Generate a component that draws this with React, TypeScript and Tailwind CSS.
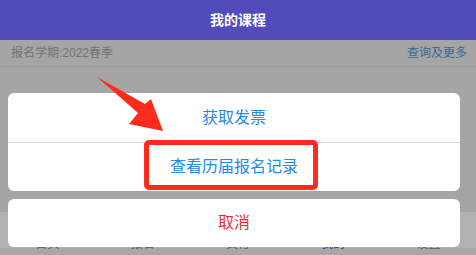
import React from "react";

const tabs = [
  { label: "首页", active: false },
  { label: "报名", active: false },
  { label: "支付", active: false },
  { label: "我的", active: true },
  { label: "设置", active: false },
];

function ActionSheet() {
  return (
    <div className="absolute left-[8px] right-[16px] bottom-[8px] flex flex-col gap-[8px] text-[16px]">
      <div className="overflow-hidden rounded-[6px] bg-white">
        <button
          type="button"
          className="flex h-[49px] w-full items-center justify-center text-[#2589e6]"
        >
          获取发票
        </button>
        <button
          type="button"
          className="flex h-[49px] w-full items-center justify-center border-t border-[#d9d9d9] text-[#2589e6]"
        >
          查看历届报名记录
        </button>
      </div>
      <button
        type="button"
        className="flex h-[48px] w-full items-center justify-center rounded-[6px] bg-white text-[#e8312f]"
      >
        取消
      </button>
    </div>
  );
}

export default function App() {
  return (
    <div
      className="relative flex h-[255px] w-[476px] flex-col overflow-hidden bg-[#a5a5a5]"
      style={{ fontFamily: '"Liberation Sans", "Noto Sans CJK SC", sans-serif' }}
    >
      <div className="flex h-[40px] items-center justify-center bg-[#524cbb] text-[14px] font-bold text-white">
        我的课程
      </div>

      <div className="flex h-[27px] items-center justify-between border-b border-[#999999] bg-[#a5a5a5] pl-[11px] pr-[9px] text-[12px]">
        <span className="text-[#737373]">报名学期:2022春季</span>
        <span className="text-[#36699a]">查询及更多</span>
      </div>

      <div className="flex-1" />

      <div className="grid h-[36px] grid-cols-5 bg-[#b1b1b1] text-[12px]">
        {tabs.map((tab) => (
          <div
            key={tab.label}
            className={
              "flex items-end justify-center leading-[14px] " +
              (tab.active ? "text-[#3d3a8c]" : "text-[#5a5a5a]")
            }
          >
            <span className="translate-y-[3px]">{tab.label}</span>
          </div>
        ))}
      </div>
      <div className="h-[7px] bg-[#a8a8a8]" />

      <ActionSheet />

      {/* annotation */}
      <div className="pointer-events-none absolute left-[144px] top-[140px] h-[50px] w-[174px] rounded-[5px] border-[5px] border-[#ff2a1c]" />
      <svg
        className="pointer-events-none absolute left-0 top-0"
        width="476"
        height="255"
        viewBox="0 0 476 255"
      >
        <polygon
          points="97,77 145,104 151,99 163,131 129,124 138,113"
          fill="#ff2a1c"
        />
      </svg>
    </div>
  );
}
